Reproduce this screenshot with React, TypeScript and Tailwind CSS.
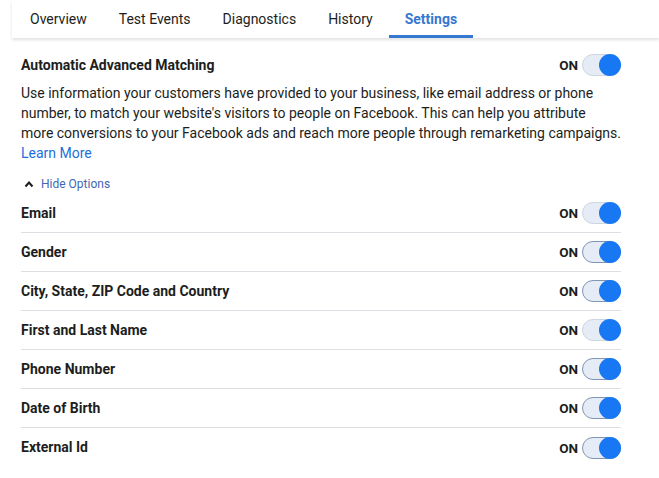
import React from "react";

const rows: { label: string; strong: boolean }[] = [
  { label: "Email", strong: false },
  { label: "Gender", strong: true },
  { label: "City, State, ZIP Code and Country", strong: true },
  { label: "First and Last Name", strong: false },
  { label: "Phone Number", strong: true },
  { label: "Date of Birth", strong: true },
  { label: "External Id", strong: true },
];

function Toggle({ strong }: { strong: boolean }) {
  return (
    <div className="flex items-center gap-[4px]">
      <span className="text-[13.5px] font-bold text-[#1c1e21] mt-[1px]">ON</span>
      <div
        className={
          "relative h-[22px] w-[39px] rounded-full bg-[#e6ecf5] border " +
          (strong ? "border-[#7f95b5]" : "border-[#ccd5e2]")
        }
      >
        <div className="absolute right-[-1px] top-[-1px] h-[22px] w-[22px] rounded-full bg-[#1877f2]" />
      </div>
    </div>
  );
}

export default function App() {
  return (
    <div
      className="w-[659px] h-[478px] bg-white overflow-hidden text-[#1c1e21]"
      style={{ fontFamily: "Roboto, 'Liberation Sans', sans-serif" }}
    >
      <div className="ml-[12px] h-[38px] flex pl-[2px] bg-white shadow-[0_2px_3px_rgba(0,0,0,0.12)] relative z-10">
        {["Overview", "Test Events", "Diagnostics", "History", "Settings"].map((t) => {
          const active = t === "Settings";
          return (
            <div
              key={t}
              className={
                "px-[16px] flex items-center text-[14px] h-full border-b-[3px] " +
                (active
                  ? "border-[#3578d0] text-[#3578d0] font-bold"
                  : "border-transparent text-[#1c1e21]")
              }
            >
              <span className="mt-[3px]">{t}</span>
            </div>
          );
        })}
      </div>
      <div className="pl-[21px] pr-[38px]">
        <div className="flex items-center justify-between mt-[16px] h-[22px]">
          <span className="text-[14px] font-bold">Automatic Advanced Matching</span>
          <Toggle strong={false} />
        </div>
        <p className="mt-[7px] text-[14px] leading-[20px] text-[#1c1e21] whitespace-nowrap">
          Use information your customers have provided to your business, like email address or phone
          <br />
          number, to match your website's visitors to people on Facebook. This can help you attribute
          <br />
          more conversions to your Facebook ads and reach more people through remarketing campaigns.
          <br />
          <span className="text-[#216fdb]">Learn More</span>
        </p>
        <div className="flex items-center mt-[12px] text-[12px] text-[#4267b2] gap-[7px] pl-[3px]">
          <svg width="10" height="8" viewBox="0 0 10 8">
            <path d="M1.5 6.5 L5 2.5 L8.5 6.5" stroke="#1c1e21" strokeWidth="2" fill="none" />
          </svg>
          <span>Hide Options</span>
        </div>
        <div className="mt-[1px]">
          {rows.map((r, i) => (
            <div
              key={r.label}
              className={
                "flex items-center justify-between h-[39px] " +
                (i < rows.length - 1 ? "border-b border-[#dcdfe3]" : "")
              }
            >
              <span className="text-[14px] font-bold">{r.label}</span>
              <Toggle strong={r.strong} />
            </div>
          ))}
        </div>
      </div>
    </div>
  );
}
